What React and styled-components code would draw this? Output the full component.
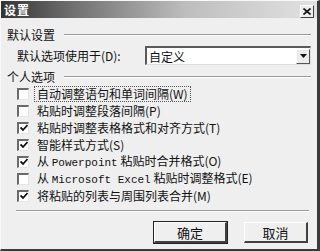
import styled, { createGlobalStyle } from "styled-components";

const GlobalStyle = createGlobalStyle`
    html, body {
        margin: 0;
        padding: 0;
        background: #f0f0f0;
    }
`;

const Window = styled.div`
    box-sizing: border-box;
    width: 320px;
    height: 251px;
    display: flex;
    flex-direction: column;
    background: #efefef;
    border-left: 1px solid #f8f8f8;
    border-top: 1px solid #f8f8f8;
    border-right: 3px solid #3a3a3a;
    border-bottom: 2px solid #3a3a3a;
    font-family: "Noto Sans CJK SC", "Noto Sans", sans-serif;
    font-size: 12px;
    color: #111;
`;

const TitleBar = styled.div`
    height: 17px;
    display: flex;
    align-items: center;
    justify-content: space-between;
    padding: 0 3px 0 3px;
    background: linear-gradient(to right, #333 0%, #6e6e6e 22%, #bdbdbd 58%, #e2e2e2 100%);
`;

const Title = styled.span`
    color: #fff;
    font-weight: bold;
    font-size: 12px;
    letter-spacing: 1px;
`;

const CloseButton = styled.div`
    box-sizing: border-box;
    width: 14px;
    height: 13px;
    margin-top: 3px;
    display: flex;
    align-items: center;
    justify-content: center;
    background: #ececec;
    border-top: 1px solid #fff;
    border-left: 1px solid #fff;
    border-right: 1px solid #404040;
    border-bottom: 1px solid #404040;
`;

const Body = styled.div`
    flex: 1;
    display: flex;
    flex-direction: column;
    padding: 8px 6px 0 6px;
`;

const GroupHeader = styled.div`
    display: flex;
    align-items: center;
    gap: 9px;
    height: 16px;
`;

const HeaderLine = styled.div`
    flex: 1;
    height: 0;
    border-top: 1px solid #9a9a9a;
    border-bottom: 1px solid #fff;
    margin-top: 2px;
`;

const FieldRow = styled.div`
    display: flex;
    align-items: center;
    justify-content: space-between;
    margin: 4px 0 3px 10px;
    height: 19px;
`;

const Select = styled.div`
    box-sizing: border-box;
    width: 166px;
    height: 19px;
    display: flex;
    align-items: center;
    justify-content: space-between;
    background: #fff;
    border-top: 2px solid #5a5a5a;
    border-left: 2px solid #5a5a5a;
    border-right: 1px solid #ddd;
    border-bottom: 1px solid #ddd;
    padding-left: 2px;
`;

const DropButton = styled.div`
    box-sizing: border-box;
    width: 14px;
    height: 15px;
    display: flex;
    align-items: center;
    justify-content: center;
    background: #ececec;
    border-right: 1px solid #555;
    border-bottom: 1px solid #555;
    border-top: 1px solid #fff;
    border-left: 1px solid #fff;
`;

const OptionList = styled.div`
    display: flex;
    flex-direction: column;
    padding-left: 10px;
    margin-top: 1px;
`;

const OptionRow = styled.div`
    display: flex;
    align-items: center;
    gap: 5px;
    height: 17px;
`;

const Box = styled.div`
    box-sizing: border-box;
    width: 12px;
    height: 12px;
    display: flex;
    align-items: center;
    justify-content: center;
    background: #fff;
    border-top: 2px solid #6a6a6a;
    border-left: 2px solid #6a6a6a;
    border-right: 1px solid #e6e6e6;
    border-bottom: 1px solid #e6e6e6;
`;

const Label = styled.span`
    padding: 0 2px;
    border: 1px dotted ${(p) => (p.$focused ? "#555" : "transparent")};
    line-height: 14px;
    white-space: nowrap;
`;

const Mono = styled.span`
    font-family: "Liberation Mono", monospace;
    font-size: 11px;
`;

const Separator = styled.div`
    margin: 6px 2px 0 9px;
    border-top: 1px solid #9a9a9a;
    border-bottom: 1px solid #fff;
`;

const ButtonRow = styled.div`
    display: flex;
    justify-content: flex-end;
    gap: 17px;
    padding: 10px 3px 0 0;
`;

const Button = styled.div`
    box-sizing: border-box;
    width: ${(p) => p.$w}px;
    height: 21px;
    display: flex;
    align-items: center;
    justify-content: center;
    background: #efefef;
    border-top: 1px solid #fff;
    border-left: 1px solid #fff;
    border-right: 2px solid #404040;
    border-bottom: 2px solid #404040;
    outline: ${(p) => (p.$default ? "1px solid #222" : "none")};
    font-size: 13px;
`;

const Check = () => (
    <svg width="8" height="8" viewBox="0 0 8 8">
        <path d="M0.5 3.5 L3 6 L7.5 1" stroke="#111" strokeWidth="1.8" fill="none" />
    </svg>
);

const options = [
    { text: <>自动调整语句和单词间隔(W)</>, checked: false, focused: true },
    { text: <>粘贴时调整段落间隔(P)</>, checked: false },
    { text: <>粘贴时调整表格格式和对齐方式(T)</>, checked: true },
    { text: <>智能样式方式(S)</>, checked: true },
    { text: <>从 <Mono>Powerpoint</Mono> 粘贴时合并格式(O)</>, checked: true },
    { text: <>从 <Mono>Microsoft Excel</Mono> 粘贴时调整格式(E)</>, checked: false },
    { text: <>将粘贴的列表与周围列表合并(M)</>, checked: true },
];

function App() {
    return (
        <>
            <GlobalStyle />
            <Window>
                <TitleBar>
                    <Title>设置</Title>
                    <CloseButton>
                        <svg width="8" height="7" viewBox="0 0 8 7">
                            <path d="M0.5 0.5 L7.5 6.5 M7.5 0.5 L0.5 6.5" stroke="#111" strokeWidth="1.6" />
                        </svg>
                    </CloseButton>
                </TitleBar>
                <Body>
                    <GroupHeader>
                        <span>默认设置</span>
                        <HeaderLine />
                    </GroupHeader>
                    <FieldRow>
                        <span>默认选项使用于(D):</span>
                        <Select>
                            <span>自定义</span>
                            <DropButton>
                                <svg width="7" height="4" viewBox="0 0 7 4">
                                    <path d="M0 0 H7 L3.5 4 Z" fill="#111" />
                                </svg>
                            </DropButton>
                        </Select>
                    </FieldRow>
                    <GroupHeader>
                        <span>个人选项</span>
                        <HeaderLine />
                    </GroupHeader>
                    <OptionList>
                        {options.map((o, i) => (
                            <OptionRow key={i}>
                                <Box>{o.checked && <Check />}</Box>
                                <Label $focused={o.focused}>{o.text}</Label>
                            </OptionRow>
                        ))}
                    </OptionList>
                    <Separator />
                    <ButtonRow>
                        <Button $w={73} $default>确定</Button>
                        <Button $w={64}>取消</Button>
                    </ButtonRow>
                </Body>
            </Window>
        </>
    );
}

export default App;
